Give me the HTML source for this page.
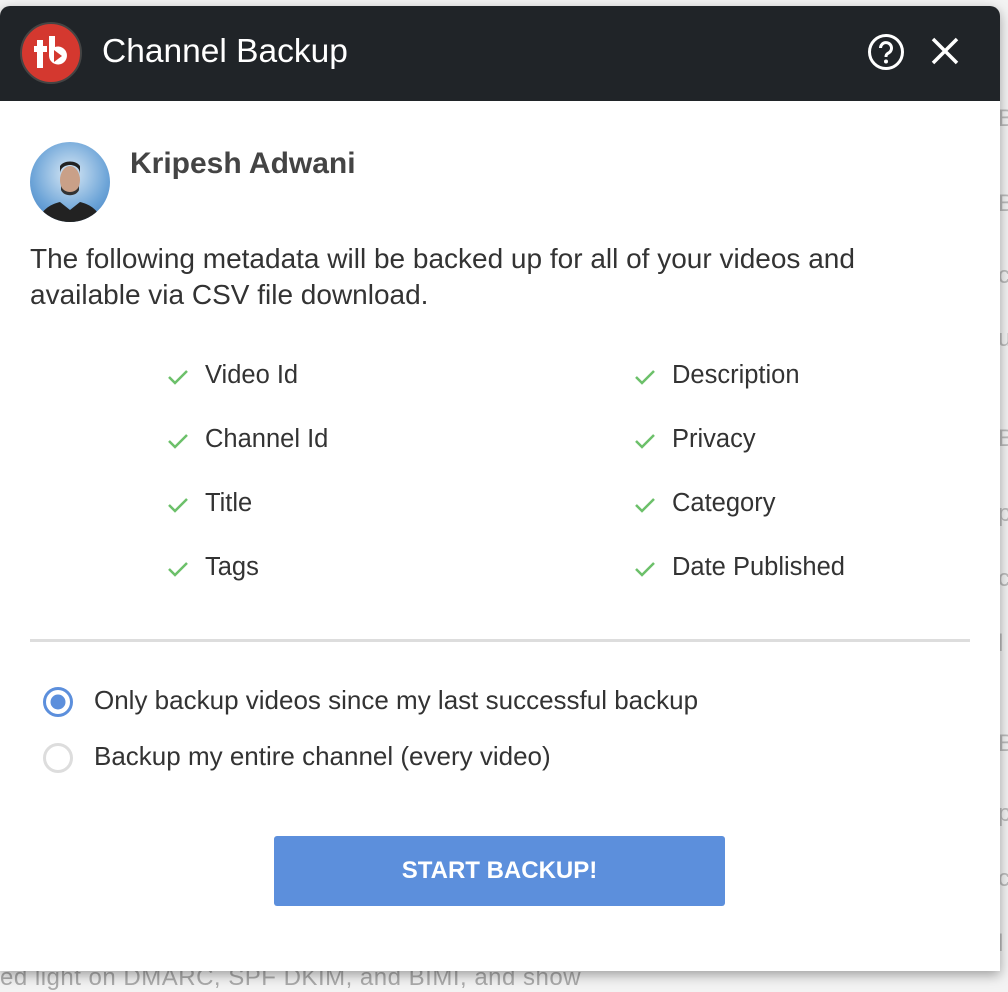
<!DOCTYPE html>
<html><head><meta charset="utf-8"><style>
*{margin:0;padding:0;box-sizing:border-box}
body{width:1008px;height:984px;overflow:hidden;background:#f3f3f3;font-family:"Liberation Sans",Arial,sans-serif;position:relative;color:#333}
.bg{position:absolute;left:998px;font-size:24px;color:#bbb}
.bottom{position:absolute;left:0;top:964px;font-size:24px;color:#aaa;white-space:nowrap;letter-spacing:0.5px}
.modal{position:absolute;left:0;top:6px;width:1000px;height:965px;background:#fff;border-radius:10px 10px 0 0;box-shadow:0 4px 12px rgba(0,0,0,.35);overflow:hidden}
.hdr{height:95px;background:#202428;position:relative}
.logo{position:absolute;left:20px;top:16px;width:62px;height:62px;border-radius:50%;background:#d4382f;border:2px solid #444}
.title{position:absolute;left:102px;top:27px;font-size:33.5px;color:#fff}
.av{position:absolute;left:30px;top:136px;width:80px;height:80px;border-radius:50%;background:radial-gradient(circle at 50% 40%,#d8e8f5 0,#6ea5d8 60%,#3b7bc0 100%);overflow:hidden}
.name{position:absolute;left:130px;top:141px;font-size:30px;font-weight:bold;color:#444}
.desc{position:absolute;left:30px;top:235px;font-size:28px;line-height:36px;color:#333;width:900px;white-space:nowrap}
.it{position:absolute;font-size:25.5px;color:#333}
.it svg{position:absolute;left:-38px;top:7px}
.hr{position:absolute;left:30px;top:633px;width:940px;height:3px;background:#ddd}
.rad{position:absolute;left:94px;font-size:26px;color:#333}
.btn{position:absolute;left:274px;top:830px;width:451px;height:70px;background:#5c8fdc;border-radius:3px;color:#fff;font-size:24px;font-weight:bold;text-align:center;line-height:70px}
</style></head><body>
<div class="bg" style="top:105px">B</div><div class="bg" style="top:190px">B</div><div class="bg" style="top:262px">c</div><div class="bg" style="top:325px">u</div><div class="bg" style="top:425px">B</div><div class="bg" style="top:500px">p</div><div class="bg" style="top:565px">c</div><div class="bg" style="top:630px">l</div><div class="bg" style="top:730px">B</div><div class="bg" style="top:800px">p</div><div class="bg" style="top:865px">c</div><div class="bg" style="top:930px">l</div>
<div class="bottom">ed light on DMARC, SPF DKIM, and BIMI, and show</div>
<div class="modal">
<div class="hdr">
<div class="logo"><svg width="58" height="58" viewBox="0 0 58 58"><path d="M15 16h6v6h4v6h-4v16h-6v-16h-3v-6h3z" fill="#fff"/><path d="M27 12h6v11a9 9 0 1 1 -6 9z" fill="#fff"/><path d="M32 26l8 6-8 6z" fill="#d4382f"/></svg></div>
<div class="title">Channel Backup</div>
<svg style="position:absolute;left:866px;top:26px" width="40" height="40" viewBox="0 0 40 40"><circle cx="20" cy="20" r="16.5" fill="none" stroke="#fff" stroke-width="3"/><path d="M14.5 16a5.5 5.5 0 1 1 8 5c-2 1-2.5 2-2.5 4" fill="none" stroke="#fff" stroke-width="3"/><circle cx="20" cy="29.5" r="2" fill="#fff"/></svg>
<svg style="position:absolute;left:930px;top:30px" width="30" height="30" viewBox="0 0 30 30"><path d="M3 3L27 27M27 3L3 27" stroke="#fff" stroke-width="3.5"/></svg>
</div>
<div class="av"><svg width="80" height="80" viewBox="0 0 80 80"><path d="M8 80c4-14 14-18 22-20l10 8 10-8c8 2 18 6 22 20z" fill="#222"/><ellipse cx="40" cy="38" rx="10" ry="14" fill="#c9a088"/><path d="M30 32c0-12 20-12 20 0l0-8c-4-6-16-6-20 0z" fill="#222"/><path d="M31 44c3 8 15 8 18 0l0 4c-3 7-15 7-18 0z" fill="#333"/></svg></div>
<div class="name">Kripesh Adwani</div>
<div class="desc">The following metadata will be backed up for all of your videos and<br>available via CSV file download.</div>
<div class="it" style="left:205px;top:355px"><svg width="22" height="18" viewBox="0 0 22 18"><path d="M2 9l6 6L20 3" fill="none" stroke="#6cc06a" stroke-width="2.5"/></svg>Video Id</div>
<div class="it" style="left:205px;top:419px"><svg width="22" height="18" viewBox="0 0 22 18"><path d="M2 9l6 6L20 3" fill="none" stroke="#6cc06a" stroke-width="2.5"/></svg>Channel Id</div>
<div class="it" style="left:205px;top:483px"><svg width="22" height="18" viewBox="0 0 22 18"><path d="M2 9l6 6L20 3" fill="none" stroke="#6cc06a" stroke-width="2.5"/></svg>Title</div>
<div class="it" style="left:205px;top:547px"><svg width="22" height="18" viewBox="0 0 22 18"><path d="M2 9l6 6L20 3" fill="none" stroke="#6cc06a" stroke-width="2.5"/></svg>Tags</div>
<div class="it" style="left:672px;top:355px"><svg width="22" height="18" viewBox="0 0 22 18"><path d="M2 9l6 6L20 3" fill="none" stroke="#6cc06a" stroke-width="2.5"/></svg>Description</div>
<div class="it" style="left:672px;top:419px"><svg width="22" height="18" viewBox="0 0 22 18"><path d="M2 9l6 6L20 3" fill="none" stroke="#6cc06a" stroke-width="2.5"/></svg>Privacy</div>
<div class="it" style="left:672px;top:483px"><svg width="22" height="18" viewBox="0 0 22 18"><path d="M2 9l6 6L20 3" fill="none" stroke="#6cc06a" stroke-width="2.5"/></svg>Category</div>
<div class="it" style="left:672px;top:547px"><svg width="22" height="18" viewBox="0 0 22 18"><path d="M2 9l6 6L20 3" fill="none" stroke="#6cc06a" stroke-width="2.5"/></svg>Date Published</div>
<div class="hr"></div>
<svg style="position:absolute;left:42px;top:680px" width="32" height="32" viewBox="0 0 32 32"><circle cx="16" cy="16" r="13.5" fill="none" stroke="#5c8fdc" stroke-width="3"/><circle cx="16" cy="16" r="7.5" fill="#5c8fdc"/></svg>
<div class="rad" style="top:679px">Only backup videos since my last successful backup</div>
<svg style="position:absolute;left:42px;top:736px" width="32" height="32" viewBox="0 0 32 32"><circle cx="16" cy="16" r="13.5" fill="none" stroke="#ddd" stroke-width="3"/></svg>
<div class="rad" style="top:735px">Backup my entire channel (every video)</div>
<div class="btn">START BACKUP!</div>
</div>
</body></html>
